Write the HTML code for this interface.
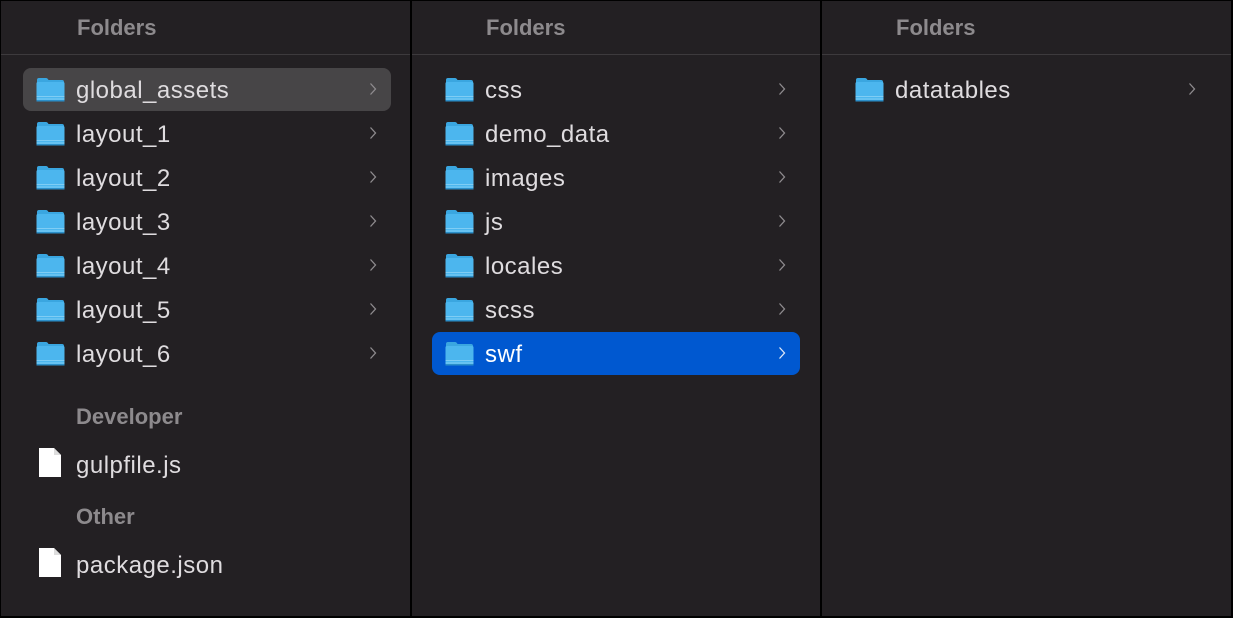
<!DOCTYPE html>
<html><head><meta charset="utf-8"><style>
*{margin:0;padding:0;box-sizing:border-box}
body{width:1233px;height:618px;background:#000;position:relative;overflow:hidden;font-family:"Liberation Sans",sans-serif}
.col{position:absolute;top:1px;height:615px;background:#232023}
.hd{position:absolute;top:0;left:0;right:0;height:54px;border-bottom:1px solid #3d3a3d}
.ht{position:absolute;left:65px;top:14px;font-size:22px;font-weight:bold;color:#8d8a8d}
.row{position:absolute;left:22px;width:368px;height:43px;border-radius:8px}
.row svg.f{position:absolute;left:13px;top:9px}
.row .t{position:absolute;left:53px;top:9px;font-size:24px;letter-spacing:0.5px;color:#dfdcdf}
.row .c{position:absolute;right:14px;top:14px}
.sec{position:absolute;left:76px;font-size:22px;font-weight:bold;color:#8d8a8d}
.file{position:absolute;left:39px}
</style></head><body>
<svg width="0" height="0" style="position:absolute"><defs>
<symbol id="fd" viewBox="0 0 29 25"><path d="M1 3 Q1 1 3 1 H10 Q11.5 1 12.5 3 H26 Q28 3 28 5 V7 H1 Z" fill="#3aa6e0"/><rect x="0.5" y="5" width="28" height="19" rx="1.5" fill="#4cb6ee"/><rect x="0.5" y="19" width="28" height="1" fill="#7fcdf4"/><rect x="0.5" y="21.5" width="28" height="1" fill="#7fcdf4"/><rect x="0.5" y="23" width="28" height="1.5" fill="#2b8fc9"/></symbol>
<symbol id="ch" viewBox="0 0 8 14"><path d="M1.5 1.5 L6.5 7 L1.5 12.5" fill="none" stroke="#8f8c8f" stroke-width="1.3"/></symbol>
<symbol id="fl" viewBox="0 0 22 29"><path d="M0 0 H15 L22 7 V29 H0 Z" fill="#fff"/><path d="M15 0 V7 H22" fill="#ddd"/></symbol>
</defs></svg>

<div class="col" style="left:1px;width:409px">
<div class="hd"><div class="ht" style="left:76px">Folders</div></div>
<div class="row" style="top:67px;background:#474547"><svg class="f" width="29" height="25"><use href="#fd"/></svg><span class="t">global_assets</span><svg class="c" width="8" height="14"><use href="#ch"/></svg></div>
<div class="row" style="top:111px"><svg class="f" width="29" height="25"><use href="#fd"/></svg><span class="t">layout_1</span><svg class="c" width="8" height="14"><use href="#ch"/></svg></div>
<div class="row" style="top:155px"><svg class="f" width="29" height="25"><use href="#fd"/></svg><span class="t">layout_2</span><svg class="c" width="8" height="14"><use href="#ch"/></svg></div>
<div class="row" style="top:199px"><svg class="f" width="29" height="25"><use href="#fd"/></svg><span class="t">layout_3</span><svg class="c" width="8" height="14"><use href="#ch"/></svg></div>
<div class="row" style="top:243px"><svg class="f" width="29" height="25"><use href="#fd"/></svg><span class="t">layout_4</span><svg class="c" width="8" height="14"><use href="#ch"/></svg></div>
<div class="row" style="top:287px"><svg class="f" width="29" height="25"><use href="#fd"/></svg><span class="t">layout_5</span><svg class="c" width="8" height="14"><use href="#ch"/></svg></div>
<div class="row" style="top:331px"><svg class="f" width="29" height="25"><use href="#fd"/></svg><span class="t">layout_6</span><svg class="c" width="8" height="14"><use href="#ch"/></svg></div>
<div class="sec" style="top:403px;left:75px">Developer</div>
<svg class="file" style="top:447px;left:38px" width="22" height="29"><use href="#fl"/></svg>
<div class="row" style="top:442px;background:none"><span class="t">gulpfile.js</span></div>
<div class="sec" style="top:503px;left:75px">Other</div>
<svg class="file" style="top:547px;left:38px" width="22" height="29"><use href="#fl"/></svg>
<div class="row" style="top:542px;background:none"><span class="t">package.json</span></div>
</div>

<div class="col" style="left:412px;width:408px">
<div class="hd"><div class="ht" style="left:74px">Folders</div></div>
<div class="row" style="left:20px;top:67px"><svg class="f" width="29" height="25"><use href="#fd"/></svg><span class="t">css</span><svg class="c" width="8" height="14"><use href="#ch"/></svg></div>
<div class="row" style="left:20px;top:111px"><svg class="f" width="29" height="25"><use href="#fd"/></svg><span class="t">demo_data</span><svg class="c" width="8" height="14"><use href="#ch"/></svg></div>
<div class="row" style="left:20px;top:155px"><svg class="f" width="29" height="25"><use href="#fd"/></svg><span class="t">images</span><svg class="c" width="8" height="14"><use href="#ch"/></svg></div>
<div class="row" style="left:20px;top:199px"><svg class="f" width="29" height="25"><use href="#fd"/></svg><span class="t">js</span><svg class="c" width="8" height="14"><use href="#ch"/></svg></div>
<div class="row" style="left:20px;top:243px"><svg class="f" width="29" height="25"><use href="#fd"/></svg><span class="t">locales</span><svg class="c" width="8" height="14"><use href="#ch"/></svg></div>
<div class="row" style="left:20px;top:287px"><svg class="f" width="29" height="25"><use href="#fd"/></svg><span class="t">scss</span><svg class="c" width="8" height="14"><use href="#ch"/></svg></div>
<div class="row" style="left:20px;top:331px;background:#0058d0"><svg class="f" width="29" height="25"><use href="#fd"/></svg><span class="t" style="color:#fff">swf</span><svg class="c" width="8" height="14"><path d="M1.5 1.5 L6.5 7 L1.5 12.5" fill="none" stroke="#dfe8f8" stroke-width="1.3"/></svg></div>
</div>

<div class="col" style="left:822px;width:409px">
<div class="hd"><div class="ht" style="left:74px">Folders</div></div>
<div class="row" style="left:20px;top:67px"><svg class="f" width="29" height="25"><use href="#fd"/></svg><span class="t">datatables</span><svg class="c" width="8" height="14"><use href="#ch"/></svg></div>
</div>
</body></html>
